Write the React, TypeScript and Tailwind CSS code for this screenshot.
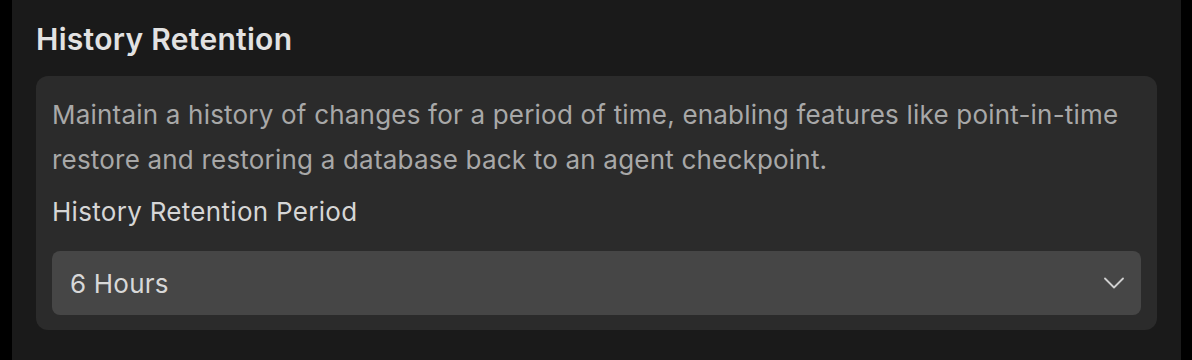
import React from 'react';

function Chevron() {
  return (
    <svg width="20" height="12" viewBox="0 0 20 12" fill="none" className="text-[#cfcfcf]">
      <polyline points="1,1.5 10,10.5 19,1.5" stroke="currentColor" strokeWidth="1.8" strokeLinecap="round" strokeLinejoin="round" />
    </svg>
  );
}

export default function App() {
  return (
    <div className="flex h-[360px] w-full bg-black" style={{ fontFamily: 'Inter, "Noto Sans", sans-serif' }}>
      <div className="ml-[12px] w-[1169px] bg-[#1a1a1a] px-6 pt-[21px]">
        <h2 className="mb-[19px] text-[30px] font-semibold leading-[36px] tracking-[0.3px] text-[#e2e2e2]">
          History Retention
        </h2>

        <div className="rounded-xl bg-[#2b2b2b] px-4 pt-4 pb-[15px]">
          <p className="text-[26px] leading-[45px] tracking-[0.2px] text-[#a8a8a8]">
            Maintain a history of changes for a period of time, enabling features like point-in-time restore and
            restoring a database back to an agent checkpoint.
          </p>
          <div className="mt-[12px] text-[26px] leading-[36px] tracking-[0.3px] text-[#d6d6d6]">History Retention Period</div>

          <button className="mt-[21px] flex h-16 w-full items-center justify-between rounded-lg bg-[#464646] pl-[18px] pr-[17px] text-left">
            <span className="text-[26px] leading-[39px] tracking-[0.2px] text-[#d8d8d8]">6 Hours</span>
            <Chevron />
          </button>
        </div>
      </div>
    </div>
  );
}
